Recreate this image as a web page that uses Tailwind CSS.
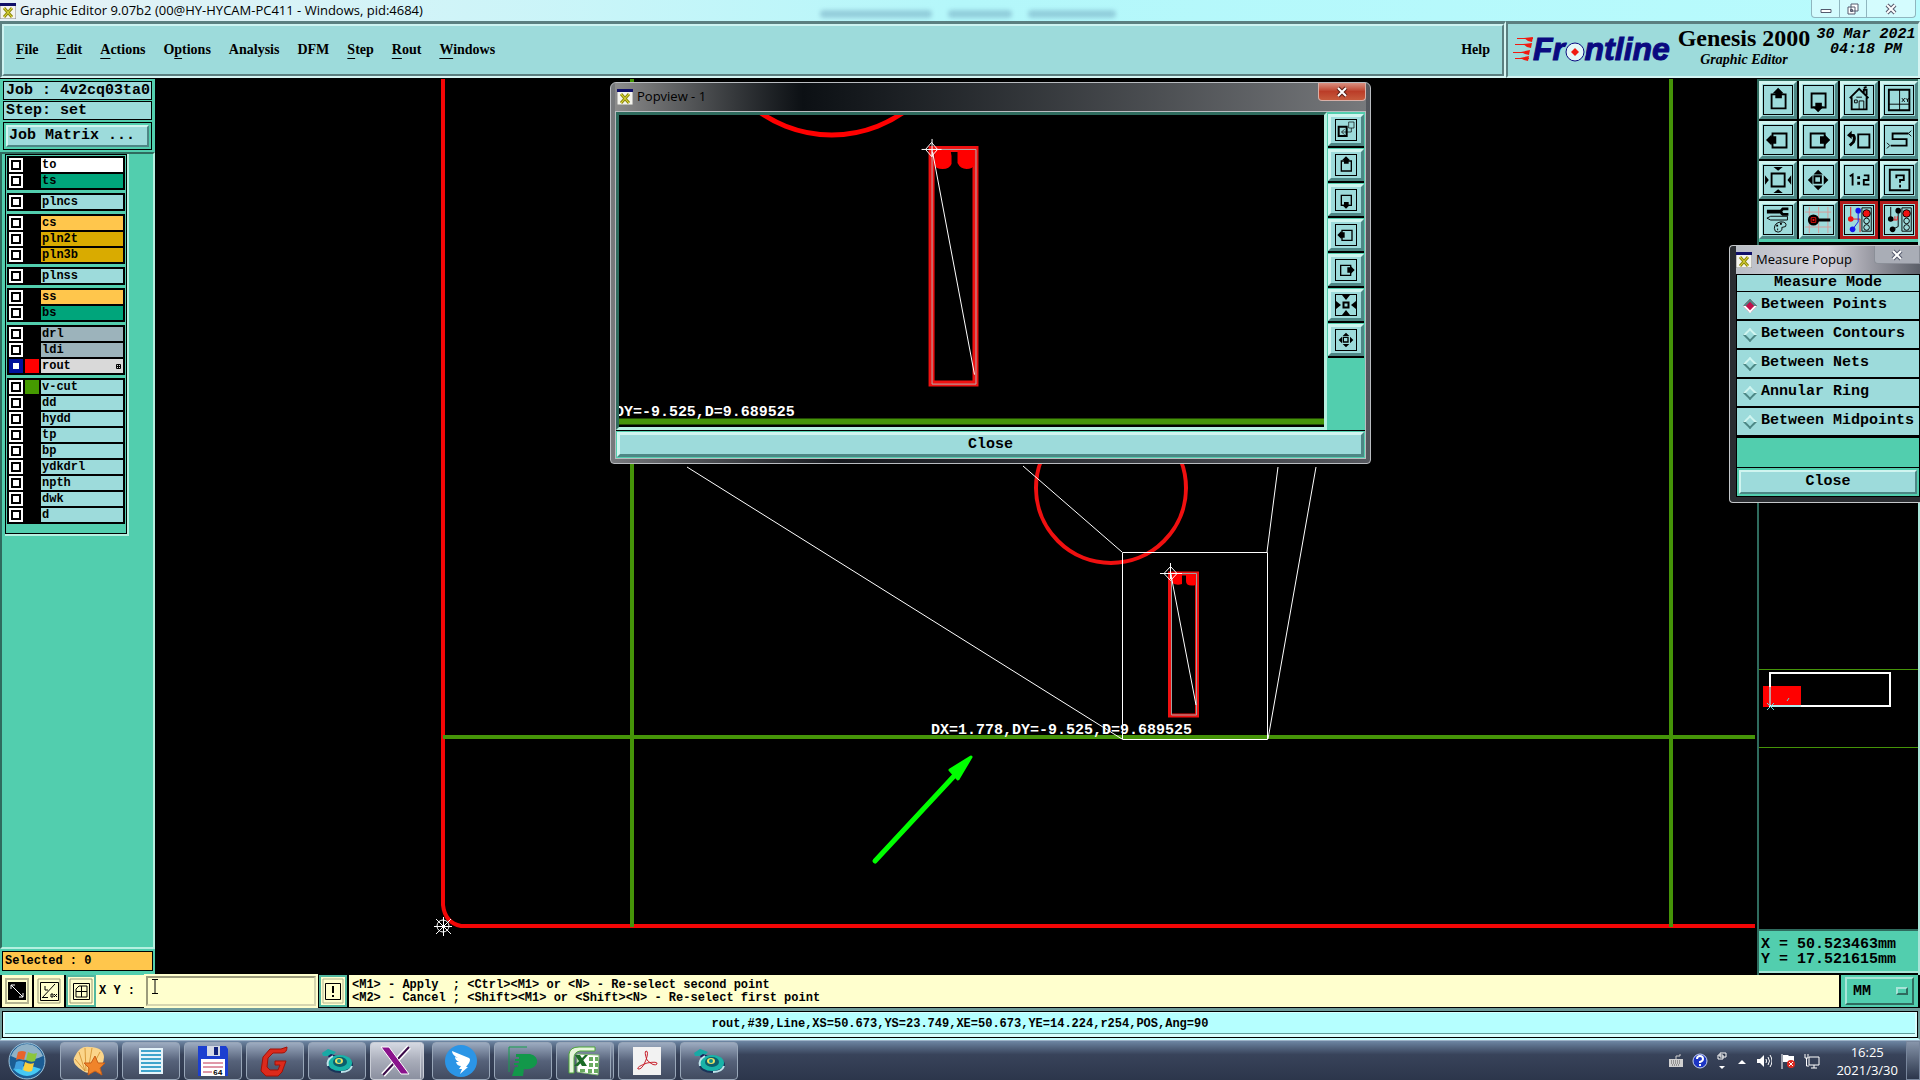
<!DOCTYPE html>
<html lang="en">
  <head>
    <meta charset="UTF-8" />
    <meta name="viewport" content="width=device-width, initial-scale=1.0" />
    <title>Graphic Editor</title>
    <script src="https://cdn.jsdelivr.net/npm/@tailwindcss/browser@4"></script>
  </head>
  <body class="relative flex min-h-screen flex-col overflow-hidden bg-black text-black font-['Liberation_Mono',monospace]">
    <!-- icon shapes shared by both toolbars -->
    <svg class="hidden">
      <symbol id="x-app" viewBox="0 0 16 16">
        <path d="M0 0h16v16H0z" fill="#f4f4ee" stroke="#888" />
        <path d="M0 0h16v3H0z" fill="#10106a" />
        <path d="M4 5l8 9M12 5l-8 9" stroke="#8f8a10" stroke-width="3" />
        <path d="M4 5l8 9M12 5l-8 9" stroke="#e6e23a" stroke-width="1" />
      </symbol>
      <symbol id="up" viewBox="0 0 30 30">
        <path d="M8 9h15v15H8z" fill="none" stroke="#000" stroke-width="2" />
        <path d="M15 2l6 6h-2v5h-7V8h-3z" />
      </symbol>
      <symbol id="down" viewBox="0 0 30 30">
        <path d="M8 8h15v15H8z" fill="none" stroke="#000" stroke-width="2" />
        <path d="M15 28l6-6h-2v-4h-7v4h-3z" />
      </symbol>
      <symbol id="left" viewBox="0 0 30 30">
        <path d="M9 8h15v15H9z" fill="none" stroke="#000" stroke-width="2" />
        <path d="M2 15l6-6v2h5v8H8v2z" />
      </symbol>
      <symbol id="right" viewBox="0 0 30 30">
        <path d="M7 8h15v15H7z" fill="none" stroke="#000" stroke-width="2" />
        <path d="M28 15l-6-6v2h-5v8h5v2z" />
      </symbol>
      <symbol id="house" viewBox="0 0 30 30">
        <path d="M5 13L15 3l10 10M7 12v13h16V12M20 8V4h3v6M20 2l3-1" fill="none" stroke="#000" stroke-width="2" />
        <path d="M15 25v-9h5v9M10 15h3v3h-3zM12 12h6" fill="none" stroke="#000" />
      </symbol>
      <symbol id="xy" viewBox="0 0 30 30">
        <path d="M4 4h22v22H4z" fill="none" stroke="#000" stroke-width="2" />
        <path d="M15.500 4v22M4 19.500h22" stroke="#000" fill="none" />
        <path d="M18 13l3 4M21 13l-3 4M22 13l2 2 1-2M24 15v2" stroke="#000" fill="none" />
      </symbol>
      <symbol id="back" viewBox="0 0 30 30">
        <path d="M14 9h12v14H14z" fill="none" stroke="#000" stroke-width="2" />
        <path d="M4 10h5q2 3 0 7l-4 4" fill="none" stroke="#000" stroke-width="3" />
        <path d="M2 10l5-5v9z" />
      </symbol>
      <symbol id="snake" viewBox="0 0 30 30">
        <path d="M25 8H8v6h15v7H6" fill="none" stroke="#000" stroke-width="2" />
        <path d="M28 5l-3 3 3 3M2 18l3 3-3 3" fill="none" stroke="#000" />
      </symbol>
      <symbol id="zoom-in" viewBox="0 0 30 30">
        <path d="M8 8h14v14H8z" fill="none" stroke="#000" stroke-width="2" />
        <path d="M10 1h10l-5 4zM10 29h10l-5-4zM1 10v10l4-5zM29 10v10l-4-5z" />
      </symbol>
      <symbol id="zoom-in-small" viewBox="0 0 20 20">
        <path d="M7.500 7.500h5v5h-5z" fill="none" stroke="#000" stroke-width="2" />
        <path d="M6 0h8l-4 5zM6 20h8l-4-5zM0 6v8l5-4zM20 6v8l-5-4z" />
      </symbol>
      <symbol id="zoom-out" viewBox="0 0 30 30">
        <path d="M11 11h7v7h-7z" fill="none" stroke="#000" stroke-width="2" />
        <path d="M15 4l5 5H10zM15 26l5-5H10zM4 15l5-5v10zM26 15l-5-5v10z" />
      </symbol>
      <symbol id="one-two" viewBox="0 0 30 30">
        <path d="M5 11l3-2v12M20 10h5v5h-5v5h6" fill="none" stroke="#000" stroke-width="2" />
        <path d="M13 11h3v3h-3zM13 17h3v3h-3z" />
      </symbol>
      <symbol id="help" viewBox="0 0 30 30">
        <path d="M5 4h21v22H5z" fill="none" stroke="#000" stroke-width="2" />
        <path d="M12 13v-3h8v5h-4v3M16 20v3" fill="none" stroke="#000" stroke-width="2" />
      </symbol>
      <symbol id="wrench" viewBox="0 0 30 30">
        <path d="M3 5h14M3 7h14" stroke="#000" stroke-width="2" />
        <path d="M26 3h-6q-4 3 0 6h6" fill="none" stroke="#000" stroke-width="3" />
        <path d="M3 13l4-2h18v4H7zM11 24q0-6 7-7 7 0 5 5l-4 1q1 4-4 5-4 0-4-4" fill="none" stroke="#000" />
        <path d="M13 21h2M17 19h2M14 25h1" stroke="#000" stroke-width="2" />
      </symbol>
      <symbol id="probe" viewBox="0 0 30 30">
        <path d="M5.500 1v28M15.500 1v28M25.500 1v28M1 6.500h28M1 22.500h28" stroke="#d89a98" />
        <circle cx="10" cy="15" r="6" />
        <path d="M15 15h13" stroke="#000" stroke-width="3" />
        <path d="M7.500 12.500h5v5h-5z" fill="none" stroke="#f01010" />
        <path d="M9 14h2v2H9z" fill="#f01010" />
      </symbol>
      <symbol id="net-red" viewBox="0 0 30 30">
        <path d="M18 2h10v25H18z" fill="none" stroke="#000" />
        <circle cx="23" cy="8" r="4" fill="#f01010" stroke="#000" />
        <circle cx="23" cy="16" r="3" fill="none" stroke="#000" />
        <circle cx="23" cy="23" r="3" fill="none" stroke="#000" />
        <path d="M6 1v13h10v14" fill="none" stroke="#f01010" stroke-width="1" />
        <path d="M14 5v12l-6 8" fill="none" stroke="#1414f0" stroke-width="1" />
        <circle cx="14" cy="5" r="3" fill="#1414f0" />
        <circle cx="8" cy="25" r="3" fill="#1414f0" />
        <circle cx="6" cy="14" r="3" fill="#f01010" />
      </symbol>
      <symbol id="net-black" viewBox="0 0 30 30">
        <path d="M18 2h10v25H18z" fill="none" stroke="#000" />
        <circle cx="23" cy="8" r="4" fill="#f01010" stroke="#000" />
        <circle cx="23" cy="16" r="3" fill="none" stroke="#000" />
        <circle cx="23" cy="23" r="3" fill="none" stroke="#000" />
        <path d="M6 1v13M14 5v17l-6 3" fill="none" stroke="#000" stroke-width="1" />
        <path d="M8 15h5M8 12v3M10.500 11v4M13 11v4" stroke="#f01010" />
        <circle cx="14" cy="5" r="3" />
        <circle cx="8" cy="25" r="3" />
        <circle cx="6" cy="14" r="3" />
      </symbol>
      <symbol id="popout" viewBox="0 0 30 30">
        <path d="M4 10h12v14H4z" fill="none" stroke="#000" stroke-width="3" />
        <path d="M19 3h8v9h-8zM23 12v6H9M13 14l-5 4 5 4" fill="none" stroke="#000" stroke-width="1" />
      </symbol>
      <symbol id="disc" viewBox="0 0 32 28">
        <path d="M1 6l6-4 8 3-4 4-9 0z" fill="#19a9a5" />
        <path d="M7 9l3-2 6 2-6 5z" fill="#1d1c58" />
        <ellipse cx="19" cy="18" rx="13" ry="8" fill="#18345a" />
        <ellipse cx="19" cy="16" rx="12" ry="8" fill="#19b3a8" />
        <ellipse cx="19" cy="15" rx="7" ry="5" fill="#0c5e6c" />
        <ellipse cx="18" cy="14" rx="4" ry="3" fill="#e9e265" />
        <circle cx="18" cy="14" r="2" fill="#0c9090" />
        <path d="M7 19q-2-6 5-10M20 25q9 0 11-6" stroke="#bfe4ea" stroke-width="2" fill="none" />
      </symbol>
    </svg>

    <!-- title bar -->
    <header class="relative flex h-[21px] items-center bg-linear-to-r from-[#e6f1f6] via-[#b4f7fa] to-[#b8fbfd] font-['Open_Sans',sans-serif] text-[13px]">
      <svg class="h-4 w-4"><use href="#x-app" /></svg>
      <h1 class="ml-1 flex-1 whitespace-nowrap">Graphic Editor 9.07b2 (00@HY-HYCAM-PC411 - Windows, pid:4684)</h1>
      <!-- window behind the glass -->
      <div aria-hidden="true" class="absolute top-2.5 left-[820px] flex gap-4 blur-[2px]">
        <span class="h-2 w-28 rounded bg-[#6fa6bd]/50"></span>
        <span class="h-2 w-16 rounded bg-[#6fa6bd]/50"></span>
        <span class="h-2 w-[88px] rounded bg-[#6fa6bd]/50"></span>
      </div>
      <div class="mr-1 flex h-[18px] self-start rounded-b border border-t-0 border-[#8fb6bf] bg-white/40">
        <button aria-label="Minimize" class="flex w-7 items-center justify-center border-r border-[#8fb6bf]">
          <svg class="h-3 w-3" viewBox="0 0 12 12"><path d="M1 6.500h10v3H1z" fill="#fff" stroke="#555a6e" /></svg>
        </button>
        <button aria-label="Restore" class="flex w-[27px] items-center justify-center border-r border-[#8fb6bf]">
          <svg class="h-3 w-3" viewBox="0 0 12 12"><path d="M4 1h7v7H4zM1 4h7v7H1z" fill="#fff" stroke="#555a6e" /><path d="M3.500 6.500h2v2h-2z" fill="none" stroke="#555a6e" /></svg>
        </button>
        <button aria-label="Close window" class="flex w-12 items-center justify-center">
          <svg class="h-3 w-3" viewBox="0 0 12 12"><path d="M2 2l8 8M10 2l-8 8" stroke="#555a6e" stroke-width="4" /><path d="M2 2l8 8M10 2l-8 8" stroke="#fff" stroke-width="2" /></svg>
        </button>
      </div>
    </header>

    <!-- menu bar and logo -->
    <div class="flex h-[58px] border-b border-black font-['Liberation_Serif',serif] font-bold">
      <div class="flex flex-1 border-2 border-t-[3px] border-t-[#5b7f80] border-l-[#5b7f80] border-r-[#d5f5f3] border-b-[#d5f5f3]">
        <nav class="flex flex-1 items-center gap-[18px] border-2 border-t-[#cdf3f1] border-l-[#cdf3f1] border-r-[#5b7f80] border-b-[#5b7f80] bg-[#9ddbdb] px-3 text-sm">
          <button><u class="underline-offset-4">F</u>ile</button>
          <button><u class="underline-offset-4">E</u>dit</button>
          <button><u class="underline-offset-4">A</u>ctions</button>
          <button>O<u class="underline-offset-4">p</u>tions</button>
          <button>Analysis</button>
          <button>DFM</button>
          <button><u class="underline-offset-4">S</u>tep</button>
          <button><u class="underline-offset-4">R</u>out</button>
          <button><u class="underline-offset-4">W</u>indows</button>
          <button class="ml-auto">Help</button>
        </nav>
      </div>
      <div class="flex w-[414px] border-2 border-t-[3px] border-t-[#5b7f80] border-l-[#5b7f80] border-r-[#d5f5f3] border-b-[#d5f5f3] bg-[#9ddbdb] pl-1">
        <svg class="h-[52px] w-[162px] shrink-0" viewBox="0 0 162 52">
          <path d="M5 14.500h16M3 20.500h16M1 28.500h16M3 34.500h14" fill="none" stroke="#f01a10" stroke-width="1" />
          <path d="M12 14l9-1-1 5-4-1zM11 20l9-1-1 5-4-1zM9 28l9-2-1 5-4-1zM8 34l9-2-1 5-4-1z" fill="#f01a10" />
          <text x="21" y="36" fill="#0a0a80" stroke="#0a0a80" font-family="Liberation Sans" font-weight="bold" font-style="italic" font-size="32">Frontline</text>
          <circle cx="63" cy="28" r="10" fill="#9ddbdb" stroke="#9ddbdb" stroke-width="2" />
          <circle cx="63" cy="28" r="9" fill="#e4f7f7" stroke="#0a0a80" stroke-width="1" />
          <path d="M63 24l4 4-4 4-4-4z" fill="#f01a10" />
        </svg>
        <div class="flex w-[140px] shrink-0 flex-col items-center pt-0.5">
          <p class="whitespace-nowrap text-2xl leading-6">Genesis 2000</p>
          <p class="text-sm leading-5 italic">Graphic Editor</p>
        </div>
        <p class="flex-1 whitespace-nowrap pt-[3px] text-center text-[15px] leading-[15px] italic font-['Liberation_Mono',monospace]">30 Mar 2021<br />04:18 PM</p>
      </div>
    </div>

    <main class="flex flex-1">
      <!-- layer list -->
      <aside class="flex w-[155px] shrink-0 flex-col bg-[#52ceae] font-bold">
        <div class="flex flex-col gap-px px-[3px] pt-0.5 text-[15px] leading-[17px]">
          <p class="border border-black bg-[#9ddbdb] px-0.5 whitespace-nowrap">Job : 4v2cq03ta0</p>
          <p class="border border-black bg-[#9ddbdb] px-0.5">Step: set</p>
          <div class="mt-px border border-black bg-[#52ceae] p-0.5">
            <button class="block w-full border-2 border-t-[#d0f5f0] border-l-[#d0f5f0] border-r-[#4d8785] border-b-[#4d8785] bg-[#9ddbdb] pl-px text-left leading-[18px]">Job Matrix ...</button>
          </div>
        </div>
        <div class="mt-0.5 flex flex-1 flex-col items-start border-2 border-t-[#2f6b5e] border-l-[#2f6b5e] border-r-[#b5f0e0] border-b-[#b5f0e0] pl-[3px]">
          <div class="border-r-2 border-b-2 border-[#b5f0e0]">
            <div id="layers" class="flex w-[122px] flex-col gap-[3px] border border-black px-px pt-px pb-[9px] text-xs leading-[14px]"></div>
          </div>
        </div>
        <p class="m-0.5 mb-1 border border-black bg-[#ffc64c] px-0.5 text-xs leading-[18px]">Selected : 0</p>
      </aside>

      <!-- drawing area -->
      <section class="relative min-w-0 flex-1">
        <svg class="absolute inset-0 h-full w-full" viewBox="155 79 1602 896" preserveAspectRatio="xMinYMin slice" fill="none">
          <path d="M443 79v826q2 18 18 21h1294" stroke="#f40606" stroke-width="4" />
          <path d="M632 79v848M1671 79v848M443 737h1312" stroke="#459408" stroke-width="4" />
          <circle cx="1111" cy="488" r="75" stroke="#f01010" stroke-width="4" />
          <path d="M1122.500 552.500h145v187h-145zM687 467l435 272M1023 466l99 86M1278 467l-11 85M1316 467l-48 272" stroke="#fff" />
          <path d="M1170 573.500h27v142h-27z" stroke="#f01010" stroke-width="4" />
          <path d="M1171.500 573.500h25v141.500h-25z" stroke="#a0a0a0" />
          <path d="M1172 574h10v10q-5 2-10-1zM1186 574h10v11q-10 2-10-4z" fill="#f00" />
          <path d="M1171 575l25 130M1160 573.500h22M1170.500 563v16M1164 573.500l6.500-7 6.500 7-6.500 7z" stroke="#fff" />
          <path d="M434 926.500h18M443.500 917v19M436 919l15 15M451 919l-15 15" stroke="#fff" />
          <circle cx="443" cy="926" r="6" stroke="#fff" />
          <text x="931" y="734" fill="#fff" font-family="Liberation Mono" font-weight="bold" font-size="15">DX=1.778,DY=-9.525,D=9.689525</text>
          <path d="M875 861l80-86" stroke="#0f0" stroke-width="5" stroke-linecap="round" />
          <path d="M971 757l-21 13 8 9z" fill="#0f0" stroke="#0f0" stroke-width="3" stroke-linejoin="round" />
        </svg>
      </section>

      <!-- toolbar and overview -->
      <aside class="flex w-[163px] shrink-0 flex-col border-x-2 border-l-[#2f6b5e] border-r-[#a8e5d8]">
        <div id="toolbar" class="grid grid-cols-4 gap-0.5 border-t-2 border-b-[3px] border-t-[#2f6b5e] border-b-[#52ceae]"></div>
        <svg class="w-full flex-1" viewBox="1759 242 159 687" preserveAspectRatio="xMinYMax slice" fill="none">
          <path d="M1930 669.500h-171.500v78H1930" stroke="#459408" />
          <path d="M1763 686h38v21h-38z" fill="#f00" />
          <path d="M1770 673h120v33h-120z" stroke="#fff" stroke-width="2" />
          <path d="M1770 687v18" stroke="#c49a9a" stroke-width="2" />
          <path d="M1771 706h30M1767 703l7 7M1774 703l-7 7M1787 701l2-3" stroke="#5fdcdc" stroke-width="1" />
        </svg>
        <p class="mb-0.5 border-y-2 border-t-[#2f6b5e] border-b-[#a8e5d8] bg-[#52ceae] px-0.5 pt-1.5 pb-1 text-[15px] leading-[15px] font-bold whitespace-nowrap">X = 50.523463mm<br />Y = 17.521615mm</p>
      </aside>
    </main>

    <!-- command line -->
    <form class="flex h-[33px] gap-0.5 border-b border-black px-0.5 text-xs font-bold">
      <button type="button" aria-label="Snap" class="w-[30px] bg-[#ffffce] p-[3px]">
        <svg class="h-full w-full" viewBox="0 0 24 26"><path d="M1 1h22v24H1z" fill="none" stroke="#b5b592" stroke-width="2" /><path d="M3 4h18v18H3z" /><path d="M6 7l12 12M6 11V7h4M18 15v4h-4" stroke="#fff" fill="none" /></svg>
      </button>
      <button type="button" aria-label="Angle" class="w-[30px] bg-[#ffffce] p-[3px]">
        <svg class="h-full w-full" viewBox="0 0 24 26"><path d="M1 1h22v24H1z" fill="none" stroke="#999978" /><path d="M3.500 4.500h18v18h-18zM5 20L18 6M5 19.500h6M8 8v4h3M14 16h2v3h-2zM17 16l3 3M20 16l-3 3" stroke="#000" fill="none" /></svg>
      </button>
      <button type="button" aria-label="Grid" class="w-[30px] border-2 border-[#52b8a0] bg-[#ffffce] p-px">
        <svg class="h-full w-full" viewBox="0 0 24 26"><path d="M1 1h22v24H1z" fill="none" stroke="#999978" /><path d="M4.500 5.500h16v16h-16zM7 11l3-3h8v11H7zM7 13.500h11M12.500 8v11" stroke="#000" fill="none" /></svg>
      </button>
      <div class="relative -ml-0.5 flex gap-px">
        <label for="xy-input" class="w-12 bg-[#ffffce] pl-[3px] leading-8">X Y :</label>
        <input id="xy-input" type="text" class="w-[172px] border-[3px] border-t-[#9c9c7c] border-l-[#9c9c7c] border-r-[#d6d6b0] border-b-[#d6d6b0] bg-[#ffffce] px-1 outline-2 -outline-offset-1 outline-[#ffffce]" />
        <!-- insertion mark -->
        <svg class="pointer-events-none absolute top-1 left-[55px] h-4 w-2" viewBox="0 0 8 16"><path d="M1 .500h6M1 14.500h6M4 1v13" stroke="#000" fill="none" /></svg>
      </div>
      <button type="button" aria-label="Alert" class="w-7 border-2 border-[#52b8a0] bg-[#ffffce] p-px">
        <svg class="h-full w-full" viewBox="0 0 22 26"><path d="M1 1h20v24H1z" fill="none" stroke="#b5b592" /><path d="M3.500 5.500h15v16h-15z" stroke="#000" fill="none" /><path d="M11 8v7M11 17v2" stroke="#000" stroke-width="2" /></svg>
      </button>
      <pre class="flex-1 bg-[#ffffce] px-[3px] pt-1 leading-[13px] font-['Liberation_Mono',monospace]">&lt;M1&gt; - Apply  ; &lt;Ctrl&gt;&lt;M1&gt; or &lt;N&gt; - Re-select second point
&lt;M2&gt; - Cancel ; &lt;Shift&gt;&lt;M1&gt; or &lt;Shift&gt;&lt;N&gt; - Re-select first point</pre>
      <div class="relative w-[77px] bg-[#52ceae] px-1 py-0.5">
        <select aria-label="Units" class="h-full w-full appearance-none border-2 border-t-[#a8e5d8] border-l-[#a8e5d8] border-r-[#2f6b5e] border-b-[#2f6b5e] pt-0.5 pl-1.5 text-[15px]">
          <option>MM</option>
          <option>INCH</option>
        </select>
        <span class="pointer-events-none absolute top-3 right-2.5 h-2 w-3 border-2 border-t-[#a8e5d8] border-l-[#a8e5d8] border-r-[#2f6b5e] border-b-[#2f6b5e]"></span>
      </div>
    </form>

    <!-- status line -->
    <div class="h-8 border-x-2 border-t-[3px] border-b-2 border-[#6f9c9a] border-b-[#c8ffff]">
      <p class="h-full border border-black bg-[#b5ffff] px-1 pt-1 text-center text-xs leading-[17px] font-bold shadow-[inset_0_-1px_0_2px_#d8ffff,inset_0_-4px_0_0_#5f9c9a]">rout,#39,Line,XS=50.673,YS=23.749,XE=50.673,YE=14.224,r254,POS,Ang=90</p>
    </div>

    <!-- taskbar -->
    <footer class="flex h-10 items-center border-t border-[#9db3c8] bg-linear-to-b from-[#6d86a3] via-[#38435a] via-35% to-[#2c364b] text-white">
      <button aria-label="Start" class="mr-[13px] ml-2">
        <svg class="h-[39px] w-[39px]" viewBox="0 0 39 39">
          <circle cx="19" cy="20" r="18" fill="#1b5c94" stroke="#9cc4dc" />
          <path d="M3 15q5-12 16-12t16 12q-16 8-32 0z" fill="#8fb1c6" />
          <path d="M5 28q14 14 28 0-14-6-28 0z" fill="#45c8f4" />
          <path d="M10 11q4-2 8 0l-2 8q-4-2-8 0z" fill="#e8642c" />
          <path d="M20 11q5 3 9 1l-2 8q-4 2-9-1z" fill="#8cc63c" />
          <path d="M8 21q4-2 8 0l-2 8q-4-2-8 0z" fill="#3f9fe0" />
          <path d="M17 21q5 3 9 1l-2 8q-4 2-9-1z" fill="#fbcf3c" />
        </svg>
      </button>
      <div class="flex gap-1">
        <button aria-label="Shell" class="flex h-[38px] w-[58px] items-center justify-center rounded-sm border border-[#98a6b8] bg-linear-to-b from-[#9cabc0] via-[#56627a] to-[#414b60]">
          <svg class="h-8 w-8" viewBox="0 0 32 32"><path d="M10 26Q-3 18 2 11 7 0 17 2q13 0 14 10 0 9-9 14-6 4-12 0z" fill="#fbd58a" /><path d="M12 26L2 14M12 26L6 7M13 26L12 3M15 26l4-23M17 26L27 7" stroke="#d99b3c" /><path d="M22 11l3 7 7 0-5 5 2 7-7-4-7 4 1-7-5-5 7 0z" fill="#f0842a" stroke="#c85f18" /></svg>
        </button>
        <button aria-label="Notes" class="flex h-[38px] w-[58px] items-center justify-center rounded-sm border border-[#98a6b8] bg-linear-to-b from-[#9cabc0] via-[#56627a] to-[#414b60]">
          <svg class="h-7 w-7" viewBox="0 0 28 28"><path d="M2 1h24v26H2z" fill="#e6f4fa" /><path d="M4 4h20M4 8h20M4 12h20M4 16h20M4 20h20M4 24h20" stroke="#3fa4cc" stroke-width="2" /></svg>
        </button>
        <button aria-label="Save" class="flex h-[38px] w-[58px] items-center justify-center rounded-sm border border-[#98a6b8] bg-linear-to-b from-[#9cabc0] via-[#56627a] to-[#414b60]">
          <svg class="h-8 w-8" viewBox="0 0 32 32"><path d="M1 1h28l2 3v27H1z" fill="#1c3fd0" /><path d="M10 1h13v10H10z" fill="#d4d9e6" /><path d="M17 2h4v8h-4z" fill="#10227c" /><path d="M4 14h24v17H4z" fill="#fff" /><path d="M6 18h20M6 22h20M6 27h9" stroke="#c03050" /><text x="16" y="30" font-size="8" font-family="Liberation Mono" font-weight="bold">64</text></svg>
        </button>
        <button aria-label="Genesis" class="flex h-[38px] w-[58px] items-center justify-center rounded-sm border border-[#98a6b8] bg-linear-to-b from-[#9cabc0] via-[#56627a] to-[#414b60]">
          <svg class="h-8 w-8" viewBox="0 0 32 32"><path d="M28 2q0 6-5 6H14l-5 5-1 9 3 3h8l2-5h-5v-4h11l-4 11-4 4H7l-5-5 2-14 7-8h11z" fill="#dc2a1c" stroke="#a01208" /></svg>
        </button>
        <button aria-label="Disc" class="flex h-[38px] w-[58px] items-center justify-center rounded-sm border border-[#98a6b8] bg-linear-to-b from-[#9cabc0] via-[#56627a] to-[#414b60]">
          <svg class="h-7 w-8"><use href="#disc" /></svg>
        </button>
        <button aria-label="X server" class="mr-1 flex h-[38px] w-[54px] items-center justify-center rounded-sm border border-r-4 border-double border-[#c9cdd6] bg-linear-to-b from-[#d5d9e2] via-[#a8acb9] to-[#8b90a0]">
          <svg class="h-8 w-8" viewBox="0 0 32 32"><path d="M29 2L3 30" stroke="#fff" stroke-width="5" /><path d="M29 2L3 30" stroke="#3a0a48" stroke-width="2" /><path d="M1 2h8l20 27h-8z" fill="#8a138c" stroke="#fff" /></svg>
        </button>
        <button aria-label="Messenger" class="flex h-[38px] w-[58px] items-center justify-center rounded-sm border border-[#98a6b8] bg-linear-to-b from-[#9cabc0] via-[#56627a] to-[#414b60]">
          <svg class="h-8 w-8" viewBox="0 0 32 32"><circle cx="16" cy="16" r="16" fill="#2b95e6" /><path d="M7 6l17 7q2 1 0 5l-3 4h2l-8 7 2-5h-3l2-3q-4 0-5-4l3 0q-4-2-4-5l3 1Q7 10 7 6z" fill="#fff" /></svg>
        </button>
        <button aria-label="P tool" class="flex h-[38px] w-[58px] items-center justify-center rounded-sm border border-[#98a6b8] bg-linear-to-b from-[#9cabc0] via-[#56627a] to-[#414b60]">
          <svg class="h-8 w-8" viewBox="0 0 32 32"><path d="M2 27V2h18" fill="none" stroke="#14a04c" stroke-width="1" /><path d="M9 9h14q8 2 7 9-3 7-13 6l-1 7H5l3-9h3v-2H7v-2h5v-2H8v-2h4v-2H9z" fill="#12984a" /></svg>
        </button>
        <button aria-label="Spreadsheet" class="flex h-[38px] w-[58px] items-center justify-center rounded-sm border border-r-4 border-double border-[#98a6b8] bg-linear-to-b from-[#9cabc0] via-[#56627a] to-[#414b60]">
          <svg class="h-8 w-8" viewBox="0 0 32 32"><path d="M1 28V9Q2 2 11 2h16v4H12q-6 1-6 7v15z" fill="#e6f6dc" stroke="#4ca638" /><path d="M9 9l22 1-1 20-21-3z" fill="#fff" stroke="#7eb872" /><path d="M21 12h4v4h-4zM27 12h3v4h-3zM21 18h4v4h-4zM27 18h3v4h-3zM12 24h5v3h-5zM20 24h4v4h-4zM26 24h4v4h-4z" fill="#69ab60" /><path d="M7 10h5l7 11h-5zM17 10h3L10 21H6z" fill="#1c6b28" /></svg>
        </button>
        <button aria-label="PDF reader" class="flex h-[38px] w-[58px] items-center justify-center rounded-sm border border-[#98a6b8] bg-linear-to-b from-[#9cabc0] via-[#56627a] to-[#414b60]">
          <svg class="h-7 w-7" viewBox="0 0 28 28"><path d="M0 0h28v28H0z" fill="#f2f2f2" /><path d="M13 4q3 0 0 9-4 10-8 9-2-2 9-6 11-2 10 1-3 3-10-4Q11 5 13 4z" fill="none" stroke="#c8202c" stroke-width="1" /></svg>
        </button>
        <button aria-label="Disc tool" class="flex h-[38px] w-[58px] items-center justify-center rounded-sm border border-[#98a6b8] bg-linear-to-b from-[#9cabc0] via-[#56627a] to-[#414b60]">
          <svg class="h-7 w-8"><use href="#disc" /></svg>
        </button>
      </div>
      <div class="ml-auto flex items-center gap-2">
        <svg class="h-4 w-4" viewBox="0 0 16 16"><path d="M1 6h14v8H1z" fill="#d0d0d0" /><path d="M3 8h10M3 10h10M4 12h8" stroke="#555" stroke-dasharray="1 1" /><path d="M8 6V3h4V1" stroke="#d0d0d0" fill="none" /></svg>
        <svg class="h-4 w-4" viewBox="0 0 16 16"><circle cx="8" cy="8" r="7" fill="#1c35c4" stroke="#c5d0f0" /><path d="M5 6q0-3 3-3t3 3q0 2-3 3v1M8 11v2" fill="none" stroke="#fff" stroke-width="2" /></svg>
        <svg class="h-5 w-3" viewBox="0 0 12 20"><path d="M4 2h6v4H4zM2 4h5v4H2z" fill="#2c364b" stroke="#fff" /><path d="M3 15h6l-3 3z" fill="#fff" /></svg>
        <svg class="mx-0.5 h-4 w-2" viewBox="0 0 8 16"><path d="M0 11h8L4 7z" fill="#fff" /></svg>
        <svg class="h-4 w-4" viewBox="0 0 16 16"><path d="M1 6h3l4-4v12l-4-4H1z" fill="#fff" /><path d="M10 6q1 2 0 4M12 4q3 4 0 8M14 2q4 6 0 12" stroke="#fff" fill="none" /></svg>
        <svg class="h-4 w-4" viewBox="0 0 16 16"><path d="M2 1v15" stroke="#fff" stroke-width="1" /><path d="M3 2h5l1 1h5v6H3z" fill="#fff" /><circle cx="11" cy="11" r="4" fill="#dd2a20" /><path d="M9 9l4 4M13 9l-4 4" stroke="#fff" /></svg>
        <svg class="h-4 w-4" viewBox="0 0 16 16"><path d="M5 4h10v8H5zM7 15h6M10 12v3M1 1v4h3V1M2.500 5v8H5" stroke="#fff" fill="none" /></svg>
        <p class="ml-2 text-center text-[13px] leading-[18px] font-['Open_Sans',sans-serif]">16:25<br />2021/3/30</p>
        <button aria-label="Show desktop" class="h-[39px] w-[14px] border border-[#78869c] bg-linear-to-b from-[#8795aa] to-[#2c364b]"></button>
      </div>
    </footer>

    <!-- Popview window -->
    <div class="absolute top-[82px] left-[610px] flex h-[382px] w-[761px] flex-col rounded-t-md rounded-b border border-[#b9bcc0] bg-linear-to-r from-[#77797c] via-[#15181d] via-30% to-[#55585e] px-1 pb-1.5 font-bold">
      <div class="flex h-7 shrink-0 items-center bg-linear-to-r from-[#8c8c8c] via-[#0c1014] via-25% to-[#77797c] pl-0.5 font-['Open_Sans',sans-serif] text-[13px] font-normal">
        <svg class="h-4 w-4"><use href="#x-app" /></svg>
        <h2 class="ml-1 flex-1">Popview - 1</h2>
        <button aria-label="Close popview" class="flex h-[18px] w-12 items-center justify-center self-start rounded-b border border-t-0 border-[#d8b0a8] bg-linear-to-b from-[#d98f80] via-[#bb3d28] to-[#c65a3c]">
          <svg class="h-3 w-3" viewBox="0 0 12 12"><path d="M2 2l8 8M10 2l-8 8" stroke="#5c2018" stroke-width="4" /><path d="M2 2l8 8M10 2l-8 8" stroke="#fff" stroke-width="2" /></svg>
        </button>
      </div>
      <div class="flex flex-1 flex-col border border-[#b9bcc0] bg-black">
        <div class="flex flex-1">
          <div class="flex-1 border-[3px] border-t-[#2f6b5e] border-l-[#2f6b5e] border-r-[#b5f0e0] border-b-[#b5f0e0] bg-black">
            <svg class="h-full w-full" viewBox="618 114 706 312" fill="none" preserveAspectRatio="xMinYMax slice">
              <circle cx="831" cy="9" r="125" stroke="#f00" stroke-width="5" />
              <path d="M931 148h44v235h-44z" stroke="#f01010" stroke-width="6" />
              <path d="M931.500 148.500h44v235h-44z" stroke="#b0b0b0" />
              <path d="M934 149h16l1 6v8q-2 5-9 5t-8-4zM957 149h17v15q-2 4-8 4t-9-6z" fill="#f00" />
              <path d="M932 151l42 223M921 148.500h20M931.500 138v18M925 148.500l6-7 6 7-6 7z" stroke="#fff" />
              <path d="M618 421h706" stroke="#459408" stroke-width="6" />
              <text x="614" y="415" fill="#fff" font-family="Liberation Mono" font-weight="bold" font-size="15">DY=-9.525,D=9.689525</text>
            </svg>
          </div>
          <div id="popview-tools" class="flex w-[38px] flex-col gap-px bg-[#52ceae] px-px pt-0.5"></div>
        </div>
        <div class="border-t border-black bg-[#52ceae] p-px">
          <button class="block w-full border-[3px] border-t-[#d0f5f0] border-l-[#d0f5f0] border-r-[#4d8785] border-b-[#4d8785] bg-[#9ddbdb] text-[15px] leading-[19px]">Close</button>
        </div>
      </div>
    </div>

    <!-- Measure window -->
    <div class="absolute top-[245px] right-0 flex h-[258px] w-[191px] flex-col rounded-l border border-r-0 border-[#c4c7ca] bg-[#2a2d31] pb-[5px] pl-1.5 text-[15px] font-bold">
      <div class="flex h-7 shrink-0 items-center bg-linear-to-r from-[#b9bec6] via-[#d6d3dc] to-[#5b5f68] font-['Open_Sans',sans-serif] text-[13px] font-normal">
        <svg class="h-4 w-4"><use href="#x-app" /></svg>
        <h2 class="ml-1 flex-1 whitespace-nowrap">Measure Popup</h2>
        <button aria-label="Close measure popup" class="flex h-[18px] w-[46px] items-center justify-center self-start rounded-bl border border-t-0 border-[#8b8f98] bg-[#a9adb6]">
          <svg class="h-3 w-3" viewBox="0 0 12 12"><path d="M2 2l8 8M10 2l-8 8" stroke="#555a6e" stroke-width="4" /><path d="M2 2l8 8M10 2l-8 8" stroke="#fff" stroke-width="2" /></svg>
        </button>
      </div>
      <fieldset class="flex flex-col border border-black bg-[#52ceae]">
        <legend class="contents"><span class="border-b border-black bg-[#9ddbdb] text-center leading-4">Measure Mode</span></legend>
        <div id="modes" class="flex flex-col gap-0.5 border-b-2 border-black bg-black"></div>
      </fieldset>
      <div class="flex flex-1 items-end border border-t-0 border-black bg-[#52ceae]">
        <div class="w-full border-t border-black p-0.5">
          <button class="block w-full border-2 border-t-[#d0f5f0] border-l-[#d0f5f0] border-r-[#4d8785] border-b-[#4d8785] bg-[#9ddbdb] leading-5">Close</button>
        </div>
      </div>
    </div>

    <script>
      // layer groups: [name, label background, colour swatch]
      const groups = [
        [["to", "bg-white"], ["ts", "bg-[#00a57b]"]],
        [["plncs", "bg-[#9ddbdb]"]],
        [["cs", "bg-[#ffc64c]"], ["pln2t", "bg-[#d9ab00]"], ["pln3b", "bg-[#d9ab00]"]],
        [["plnss", "bg-[#9ddbdb]"]],
        [["ss", "bg-[#ffc64c]"], ["bs", "bg-[#00a57b]"]],
        [["drl", "bg-[#9cb3bb]"], ["ldi", "bg-[#9cb3bb]"], ["rout", "bg-[#d9d9d9]", "bg-[#ff0000]"]],
        [["v-cut", "bg-[#9ddbdb]", "bg-[#459a00]"], ["dd", "bg-[#9ddbdb]"], ["hydd", "bg-[#9ddbdb]"], ["tp", "bg-[#9ddbdb]"], ["bp", "bg-[#9ddbdb]"], ["ydkdrl", "bg-[#9ddbdb]"], ["npth", "bg-[#9ddbdb]"], ["dwk", "bg-[#9ddbdb]"], ["d", "bg-[#9ddbdb]"]],
      ];
      document.getElementById("layers").innerHTML = groups
        .map((group) => {
          const rows = group.map(([name, bg, swatch]) => {
            const active = name === "rout";
            const box = active ? "border-[#00109c] outline-[#00109c]" : "border-black outline-white";
            const mark = active ? '<svg class="mr-px h-[5px] w-[5px]" viewBox="0 0 5 5"><path d="M.500.500h4v4h-4zM2.500.500v4M.500 2.500h4" fill="none" stroke="#000" /></svg>' : "";
            return `<label class="flex h-3.5 items-center gap-0.5">
              <input type="checkbox" class="m-0.5 h-2.5 w-2.5 appearance-none border-2 bg-white outline-2 ${box}" ${active ? "checked" : ""} />
              <span class="h-3.5 w-3.5 ${swatch || "bg-black"}"></span>
              <span class="flex h-3.5 flex-1 items-center justify-between px-px ${bg}">${name}${mark}</span>
            </label>`;
          });
          return `<div class="flex flex-col gap-0.5 border border-x-2 border-black bg-black py-px">${rows.join("")}</div>`;
        })
        .join("");

      const tools = ["up", "down", "house", "xy", "left", "right", "back", "snake", "zoom-in", "zoom-out", "one-two", "help", "wrench", "probe", "net-red", "net-black"];
      document.getElementById("toolbar").innerHTML = tools
        .map((id) => {
          const edge = id.startsWith("net")
            ? "border-[#b01818]"
            : "border-t-[#d0f5f0] border-l-[#d0f5f0] border-r-[#4d8785] border-b-[#4d8785]";
          return `<button aria-label="${id}" class="h-[38px] border-[3px] bg-[#9ddbdb] p-px ${edge}"><svg class="h-[30px] w-full border border-black"><use href="#${id}" /></svg></button>`;
        })
        .join("");

      const popTools = ["popout", "up", "down", "left", "right", "zoom-in-small", "zoom-out"];
      document.getElementById("popview-tools").innerHTML = popTools
        .map((id) => `<div class="border-b-2 border-black"><button aria-label="popview ${id}" class="flex h-8 w-full items-center justify-center border-[3px] border-t-[#d0f5f0] border-l-[#d0f5f0] border-r-[#4d8785] border-b-[#4d8785] bg-[#9ddbdb]"><svg class="h-[22px] w-[22px] border border-black"><use href="#${id}" /></svg></button></div>`)
        .join("");

      const modes = ["Between Points", "Between Contours", "Between Nets", "Annular Ring", "Between Midpoints"];
      document.getElementById("modes").innerHTML = modes
        .map((mode, i) => {
          const look = i === 0
            ? "border-t-[#4d8785] border-l-[#4d8785] border-r-white border-b-white bg-[#c0104c]"
            : "border-t-[#d0f5f0] border-l-[#d0f5f0] border-r-[#4d8785] border-b-[#4d8785]";
          return `<label class="flex h-[27px] items-center gap-1.5 bg-[#9ddbdb] pl-2 whitespace-nowrap">
            <input type="radio" name="mode" class="h-2.5 w-2.5 shrink-0 rotate-45 appearance-none border-2 ${look}" ${i === 0 ? "checked" : ""} />${mode}
          </label>`;
        })
        .join("");
    </script>
  </body>
</html>
